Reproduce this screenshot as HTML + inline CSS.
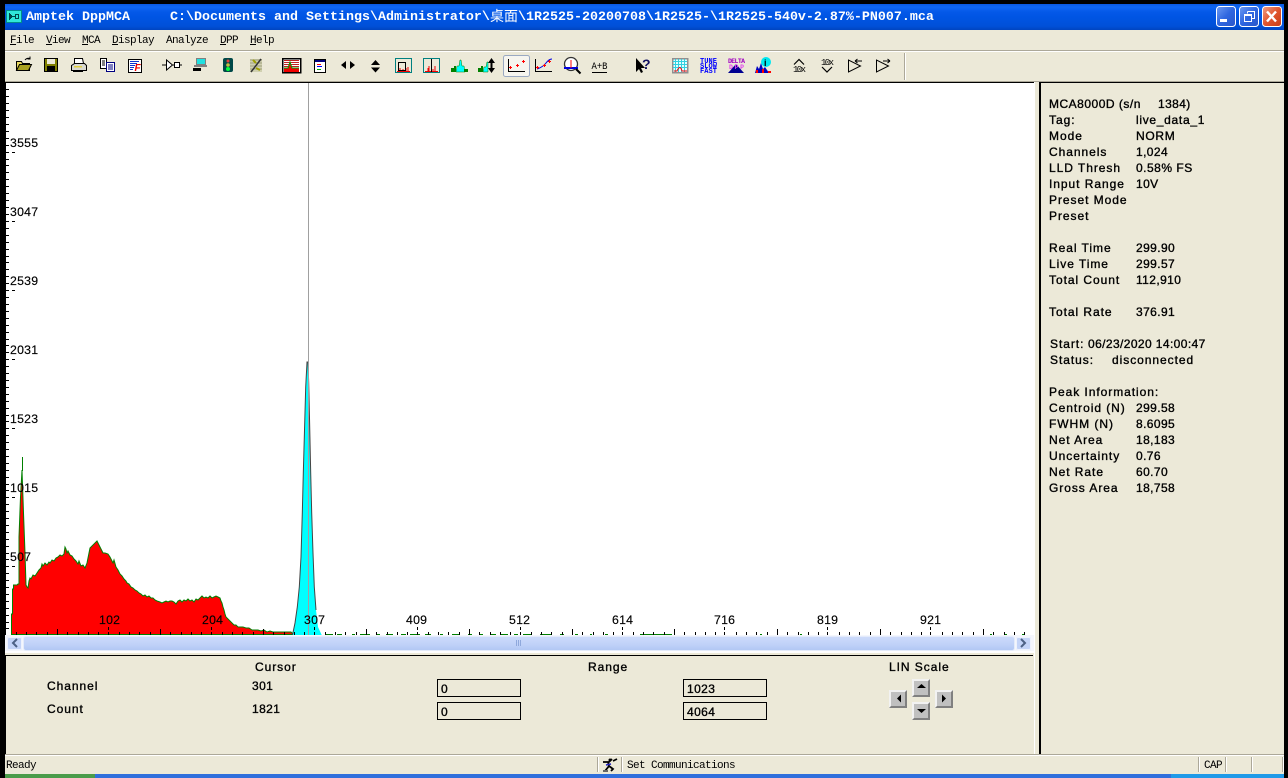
<!DOCTYPE html>
<html><head><meta charset="utf-8"><title>Amptek DppMCA</title>
<style>
html,body{margin:0;padding:0;background:#000;width:1288px;height:778px;overflow:hidden}
#a{position:absolute;left:0;top:0;width:1288px;height:778px;overflow:hidden;background:#000}
#a div,#a span.t{position:absolute}
.t{position:absolute;white-space:pre;line-height:14px;font-family:"Liberation Sans",sans-serif;font-size:12px;letter-spacing:.95px;color:#000;-webkit-text-stroke:.35px #000}
.v{letter-spacing:.4px}
.m{position:absolute;margin-top:1px;white-space:pre;line-height:14px;font-family:"Liberation Mono",monospace;font-size:11px;letter-spacing:-.6px;color:#000}
.m u{text-decoration:underline}
.l{position:absolute;white-space:pre;line-height:14px;font-family:"Liberation Sans",sans-serif;font-size:12.3px;letter-spacing:.25px;color:#000;-webkit-text-stroke:.15px #000}
.h{position:absolute;white-space:pre;line-height:20px;top:7px;margin-top:1px;font-family:"Liberation Mono",monospace;font-weight:bold;font-size:13.33px;color:#fff}
.box{border:1px solid #000;box-sizing:border-box;height:18px;width:84px}
.btn{width:18px;height:18px;box-sizing:border-box;background:#c0c0c0;border:2px solid;border-color:#f2f2f2 #808080 #808080 #f2f2f2}
.sep{width:1px;height:15px;top:757px;background:#aca899;box-shadow:1px 0 #fff}
</style></head><body><div id="a">
<!-- title bar -->
<div style="left:5px;top:4px;width:1279px;height:26px;background:linear-gradient(#0a58e0 0,#0f66f2 3px,#0458e8 8px,#0055e4 50%,#0050d8 85%,#0044c0 100%)"></div>
<svg style="position:absolute;left:6px;top:10px" width="16" height="13" shape-rendering="crispEdges"><rect x="0" y="0" width="16" height="13" fill="#008c8c"/><rect x="1" y="1" width="14" height="11" fill="#30e8d8"/><path d="M3 3v7h1V9h1V8h1V5H5V4H4V3z" fill="#004848"/><rect x="9" y="4" width="4" height="5" fill="#004848"/><rect x="10" y="5" width="2" height="3" fill="#30e8d8"/><rect x="6" y="6" width="3" height="1" fill="#004848"/></svg>
<span class="h" style="left:26px">Amptek DppMCA</span>
<span class="h" style="left:170px">C:\Documents and Settings\Administrator\</span>
<span class="h" style="left:490px;font-family:'Liberation Mono','WenQuanYi Zen Hei','Noto Sans CJK SC',monospace;font-size:14px;font-weight:normal">桌面</span>
<span class="h" style="left:518px">\1R2525-20200708\1R2525-\1R2525-540v-2.87%-PN007.mca</span>
<svg style="position:absolute;left:1215px;top:5px" width="68" height="24">
<defs><linearGradient id="bb" x1="0" y1="0" x2="1" y2="1"><stop offset="0" stop-color="#6f9cf2"/><stop offset=".5" stop-color="#2e66e0"/><stop offset="1" stop-color="#2a56c8"/></linearGradient>
<linearGradient id="rb" x1="0" y1="0" x2="1" y2="1"><stop offset="0" stop-color="#f0a088"/><stop offset=".5" stop-color="#e0552e"/><stop offset="1" stop-color="#c83c14"/></linearGradient></defs>
<rect x="1.500" y="1.500" width="19" height="20" rx="3" fill="url(#bb)" stroke="#fff"/>
<rect x="5" y="14" width="7" height="3" fill="#fff"/>
<rect x="24.500" y="1.500" width="19" height="20" rx="3" fill="url(#bb)" stroke="#fff"/>
<path d="M32.500 6.500h7v7h-3M32.500 6.500v2" fill="none" stroke="#fff"/><rect x="29.500" y="9.500" width="7" height="7" fill="none" stroke="#fff"/><rect x="29" y="9" width="8" height="2" fill="#fff"/>
<rect x="47.500" y="1.500" width="19" height="20" rx="3" fill="url(#rb)" stroke="#fff"/>
<path d="M52 6.500l9 10M61 6.500l-9 10" stroke="#fff" stroke-width="2.400"/>
</svg>
<!-- menu + toolbar area -->
<div style="left:5px;top:30px;width:1279px;height:52px;background:#ece9d8"></div>
<div style="left:5px;top:50px;width:1279px;height:1px;background:#aca899"></div>
<div style="left:5px;top:51px;width:1279px;height:1px;background:#fff"></div>
<div style="left:5px;top:81px;width:1279px;height:1px;background:#aca899"></div>
<div style="left:904px;top:53px;width:1px;height:27px;background:#aca899;box-shadow:1px 0 #fff"></div>
<span class="m" style="left:10px;top:33px"><u>F</u>ile</span>
<span class="m" style="left:46px;top:33px"><u>V</u>iew</span>
<span class="m" style="left:82px;top:33px"><u>M</u>CA</span>
<span class="m" style="left:112px;top:33px"><u>D</u>isplay</span>
<span class="m" style="left:166px;top:33px">Analyze</span>
<span class="m" style="left:220px;top:33px"><u>D</u>PP</span>
<span class="m" style="left:250px;top:33px"><u>H</u>elp</span>
<!-- toolbar icons -->
<svg style="position:absolute;left:0;top:52px" width="920" height="30" viewBox="0 52 920 30">
<!-- open -->
<path d="M16.500 61.500h5l1 2h7v7h-13z" fill="#e8d860" stroke="#000"/><path d="M16.500 70.500l3-6h12l-3 6z" fill="#a8a020" stroke="#000"/><path d="M25 60q2-2.500 5-1.500M30 56.500v2.500h-2.500" fill="none" stroke="#000"/>
<!-- save -->
<g shape-rendering="crispEdges"><rect x="44.500" y="58.500" width="13" height="13" fill="#808000" stroke="#000"/><rect x="47" y="59" width="8" height="5" fill="#ece9d8"/><rect x="47" y="66" width="8" height="5" fill="#000"/></g>
<!-- print -->
<path d="M74.500 58.500h8l1 5h-9z" fill="#fff" stroke="#000"/><path d="M71.500 65.500l3-2h10l2 2v5h-15z" fill="#d8d8d0" stroke="#000"/><rect x="74" y="66" width="8" height="1.500" fill="#e0d040"/><path d="M73 70.500h10v1.500H73z" fill="#000"/>
<!-- copy -->
<g shape-rendering="crispEdges"><path d="M100.500 58.500h6v10h-6z" fill="#fff" stroke="#000"/><path d="M102 61h3M102 63h3M102 65h3" stroke="#000"/><path d="M106.500 62.500h8v9h-8z" fill="#fff" stroke="#000080"/><path d="M108 65h5M108 67h5M108 69h5" stroke="#000080"/></g>
<!-- F doc -->
<g shape-rendering="crispEdges"><rect x="128.500" y="59.500" width="13" height="13" fill="#fff" stroke="#000"/><path d="M130 61.500h9M130 63.500h7M130 65.500h5M130 67.500h4M130 69.500h3" stroke="#1030d0"/></g>
<text x="134.500" y="71" font-family="Liberation Sans,sans-serif" font-size="10" font-weight="bold" font-style="italic" fill="#f00000">F</text>
<!-- diode -->
<g shape-rendering="crispEdges"><path d="M162 65h4M179 65h3M173 65h1" stroke="#000"/><rect x="174.500" y="62.500" width="5" height="5" fill="#fff" stroke="#000"/></g><path d="M166.500 60v10l6-5z" fill="#fff" stroke="#000"/>
<!-- computer -->
<g shape-rendering="crispEdges"><rect x="196.500" y="58.500" width="9" height="6" fill="#20e0e0" stroke="#808080"/><rect x="194" y="65" width="13" height="2" fill="#808080"/><rect x="193" y="68" width="8" height="3" fill="#000"/></g>
<!-- traffic -->
<rect x="223" y="58" width="10" height="14" rx="2" fill="#004848"/><circle cx="228" cy="61" r="1.500" fill="#e04040"/><circle cx="228" cy="65" r="1.800" fill="#c0c040"/><circle cx="228" cy="69" r="2" fill="#00ff40"/>
<!-- satellite -->
<g shape-rendering="crispEdges"><rect x="250" y="59" width="12" height="13" fill="#d0d0b0"/><path d="M250 60h12M250 63h12M250 66h12M250 69h12" stroke="#a0a080"/></g><path d="M251 72l10-13" stroke="#333" stroke-width="1.500"/><path d="M253 60l3 3M256 68l4 2" stroke="#a0a000" stroke-width="2"/>
<!-- red chart -->
<g shape-rendering="crispEdges"><rect x="282.500" y="58.500" width="18" height="14" fill="#fff" stroke="#000" stroke-width="1.500"/><path d="M284 60.500h15M284 62.500h15M284 64.500h15M284 66.500h15" stroke="#c02020"/><rect x="284" y="68" width="15" height="4" fill="#f00000"/></g><path d="M284 68h4l2-6 2 6h7" fill="#f00000" stroke="#00a000"/>
<!-- list -->
<g shape-rendering="crispEdges"><rect x="314.500" y="59.500" width="11" height="13" fill="#fff" stroke="#000"/><rect x="315" y="60" width="10" height="2" fill="#000080"/><path d="M317 64.500h4" stroke="#f00"/><path d="M317 66.500h5" stroke="#00f"/><path d="M317 69.500h4" stroke="#0a0"/></g>
<!-- arrows -->
<path d="M346 61v8l-5-4zM350 61v8l5-4z" fill="#000"/>
<path d="M375.500 60l-4.500 5h9zM375.500 72.500l-4.500-5h9z" fill="#000"/>
<!-- zoom boxes -->
<g shape-rendering="crispEdges"><rect x="395.500" y="58.500" width="16" height="14" fill="#ece9d8" stroke="#008080"/><path d="M397 71.500h13M400 71v-3M406 71v-3M403 71v-2M408 71v-4" stroke="#f00000"/><rect x="398.500" y="62.500" width="7" height="8" fill="none" stroke="#000"/>
<rect x="423.500" y="58.500" width="16" height="14" fill="#ece9d8" stroke="#008080"/><path d="M425 71.500h13M428 71v-3M435 71v-5M433 71v-2M429 71v-5" stroke="#f00000"/><path d="M431.500 59v13" stroke="#000"/></g>
<!-- peaks -->
<path d="M451 72v-4h3v-2h2v6z" fill="#008000"/><path d="M456 72l1-6h2l1-6h1l1 6h2l1 6z" fill="#00ffff" stroke="#008000" stroke-width=".5"/><path d="M464 72v-3h4v3z" fill="#008000"/>
<path d="M478 72v-4h3v-2h2v6z" fill="#008000"/><path d="M483 72l1-5h2l1-5h1v10z" fill="#00ffff" stroke="#008000" stroke-width=".5"/><path d="M491.500 62v8" stroke="#000" stroke-width="2"/><path d="M491.500 58l-3.500 5h7zM491.500 73l-3.500-5h7z" fill="#000"/>
<!-- selected -->
<rect x="503.500" y="55.500" width="26" height="21" rx="2" fill="#f6f5ef" stroke="#9aa9c2"/>
<g shape-rendering="crispEdges"><path d="M508.500 59v12.500H525" fill="none" stroke="#000"/><path d="M509 67.500h3M510.500 66v3M516 65.500h3M517.500 64v3M522 61.500h3M523.500 60v3" stroke="#f00"/>
<path d="M535.500 59v12.500H552" fill="none" stroke="#000"/></g>
<path d="M537 69q6-2 9-6t6-4" fill="none" stroke="#0000e0"/><path d="M536 67.500h3M537.500 66v3M543 65.500h3M544.500 64v3M548 61.500h3M549.500 60v3" stroke="#f00" shape-rendering="crispEdges"/>
<!-- magnifier -->
<circle cx="571" cy="64" r="6.500" fill="#fff" stroke="#333" stroke-width="1.300"/><path d="M564 68h14" stroke="#0000e0" stroke-width="2"/><path d="M571 60v8" stroke="#f00"/><path d="M576 69l4.500 4.500" stroke="#000" stroke-width="2"/>
<!-- A+B -->
<text x="591.500" y="69" font-family="Liberation Mono,monospace" font-size="10" fill="#000" textLength="16" lengthAdjust="spacingAndGlyphs">A+B</text><path d="M592 72.500h15" stroke="#000"/>
<!-- help arrow -->
<path d="M636 58v14l3-3 2 4 2-1-2-4h4z" fill="#000"/><text x="642" y="69" font-family="Liberation Sans,sans-serif" font-size="14" font-weight="bold" fill="#101060">?</text>
<!-- grid -->
<g shape-rendering="crispEdges"><rect x="672.500" y="58.500" width="15" height="14" fill="#e0ffff" stroke="#909090" stroke-width="1.500"/><path d="M675.500 59v13M678.500 59v13M681.500 59v13M684.500 59v13M673 61.500h14M673 64.500h14M673 67.500h14" stroke="#30d0e0"/></g><path d="M674 71h3q3-7 5 0h5" fill="none" stroke="#f00"/>
<!-- tune -->
<g font-family="Liberation Mono,monospace" font-size="7" font-weight="bold" fill="#0000ff"><text x="700" y="63" textLength="17">TUNE</text><text x="700" y="68" textLength="17">SLOW</text><text x="700" y="73" textLength="17">FAST</text></g>
<!-- delta -->
<path d="M728 73l8-9 8 9z" fill="#000090"/><text x="728" y="63" font-family="Liberation Mono,monospace" font-size="6.500" font-weight="bold" fill="#a000c0" textLength="17">DELTA</text><text x="729" y="69" font-family="Liberation Mono,monospace" font-size="6.500" font-weight="bold" fill="#e040f0" textLength="15">DPP</text>
<!-- info -->
<path d="M755 73l2-7 2 3 2-6 2 6 2-2 2 3 2 3z" fill="#0000c0"/><path d="M756 73v-3h2v3zM762 73v-4h2v4zM768 73v-2h3v2z" fill="#f00"/><circle cx="766" cy="62" r="5" fill="#00e8f0"/><text x="764" y="66" font-family="Liberation Sans,sans-serif" font-size="9" font-weight="bold" fill="#000">i</text>
<!-- 10x -->
<path d="M794 64.500l5-5 5 5" fill="none" stroke="#000" stroke-width="1.200"/><text x="793" y="72" font-family="Liberation Mono,monospace" font-size="9" fill="#000" textLength="13">10x</text>
<text x="821" y="65" font-family="Liberation Mono,monospace" font-size="9" fill="#000" textLength="13">10x</text><path d="M822 67l5 5 5-5" fill="none" stroke="#000" stroke-width="1.200"/>
<!-- triangles -->
<path d="M848.500 60v12l12-6z" fill="none" stroke="#000"/><path d="M855 61h7M855 61l2.500-2M855 61l2.500 2" stroke="#000" fill="none"/>
<path d="M876.500 60v12l12-6z" fill="none" stroke="#000"/><path d="M883 61h7M890 61l-2.500-2M890 61l-2.500 2" stroke="#000" fill="none"/>
</svg>
<!-- main bg -->
<div style="left:5px;top:82px;width:1279px;height:692px;background:#ece9d8"></div>
<!-- chart -->
<div style="left:5px;top:82px;width:1029px;height:571px;background:#fff"></div>
<div style="left:5px;top:82px;width:1029px;height:1px;background:#000"></div>
<div style="left:5px;top:82px;width:1px;height:553px;background:#000"></div>
<svg style="position:absolute;left:0;top:0" width="1040" height="640">
<!-- y minor ticks -->
<path shape-rendering="crispEdges" stroke="#000" d="M6 89.500h3M6 96.500h3M6 103.500h3M6 110.500h3M6 117.500h3M6 124.500h3M6 131.500h3M6 138.500h3M6 145.500h3M6 152.500h3M6 159.500h3M6 165.500h3M6 172.500h3M6 179.500h3M6 186.500h3M6 193.500h3M6 200.500h3M6 207.500h3M6 214.500h3M6 221.500h3M6 228.500h3M6 235.500h3M6 242.500h3M6 249.500h3M6 256.500h3M6 262.500h3M6 269.500h3M6 276.500h3M6 283.500h3M6 290.500h3M6 297.500h3M6 304.500h3M6 311.500h3M6 318.500h3M6 325.500h3M6 332.500h3M6 339.500h3M6 345.500h3M6 352.500h3M6 359.500h3M6 366.500h3M6 373.500h3M6 380.500h3M6 387.500h3M6 394.500h3M6 401.500h3M6 408.500h3M6 415.500h3M6 421.500h3M6 428.500h3M6 435.500h3M6 442.500h3M6 449.500h3M6 456.500h3M6 463.500h3M6 470.500h3M6 477.500h3M6 484.500h3M6 490.500h3M6 497.500h3M6 504.500h3M6 511.500h3M6 518.500h3M6 525.500h3M6 532.500h3M6 539.500h3M6 546.500h3M6 553.500h3M6 559.500h3M6 566.500h3M6 573.500h3M6 580.500h3M6 587.500h3M6 594.500h3M6 601.500h3M6 608.500h3M6 615.500h3M6 622.500h3M6 628.500h3M12 152.500h3M12 221.500h3M12 290.500h3M12 359.500h3M12 428.500h3M12 497.500h3M12 566.500h3"/>
<!-- spectrum red -->
<path fill="#ff0000" stroke="#008000" stroke-width="1" d="M11.500 634.500L11.500 614 12.500 614 12.500 589 13.500 589 13.500 585 17 585 18 584 19 584 19 537 20.500 497 22 470 23.500 513 25 553 26 585 27 587 28 588 29 581 30 578 31 579 33 575 35 576 37 573 39 570 41 568 42 564 43 566 45 563 47 565 49 562 50 563 52 560 54 561 56 558 58 557 60 555 62 556 64 554 65 547 66 549 67 553 68 551 70 555 72 556 74 559 76 561 78 564 79 561 81 566 83 565 85 568 87 563 89 553 90 548 92 546 94 544 96 542 97 541 99 545 101 549 103 553 105 553 108 554 110 557 112 561 113 563 114 560 116 567 118 570 120 574 122 576 124 579 126 581 127 583 129 584 131 587 133 588 135 590 137 591 139 593 141 594 143 596 145 595 147 597 149 596 151 598 153 598 155 600 157 601 160 602 162 603 164 602 166 601 168 602 170 601 172 601 174 602 176 604 178 601 180 600 182 602 184 600 186 601 188 599 190 601 192 600 194 602 196 599 198 600 200 598 202 596 204 598 206 597 208 598 210 596 212 598 214 597 216 596 218 597 220 598 221 601 222 603 223 607 224 610 225 614 226 617 228 619 230 621 232 623 234 625 236 625 238 627 240 627 243 627 246 628 249 628 252 630 255 630 258 630 261 631 264 630 267 632 270 631 273 632 276 632 279 632 282 632 285 632 288 632 291 632 293 634 293 634.500Z"/>
<path d="M22.500 457v14" stroke="#008000" stroke-width="1"/>
<!-- baseline green bits -->
<path shape-rendering="crispEdges" stroke="#008000" d="M325 634.500h8M337 634.500h5M352 634.500h3M360 634.500h10M376 634.500h4M386 634.500h7M401 634.500h5M410 634.500h10M425 634.500h6M440 634.500h3M452 634.500h8M468 634.500h4M480 634.500h3M490 634.500h6M500 634.500h8M514 634.500h4M523 634.500h8M540 634.500h6M546 634.500h6M560 634.500h4M575 634.500h3M590 634.500h2M605 634.500h3M640 634.500h32M760 634.500h2M800 634.500h2M990 634.500h2M1005 634.500h2M1022 634.500h2"/>
<!-- cyan peak -->
<path fill="#00ffff" stroke="none" d="M292.500 635l2.500-12 2.300-16 2-20 1.700-30 1.300-44 1-40 1.400-50 1-36 1.300-25h1l.7 21 1 44 1 46 1 40 1.300 40 1.300 34 1.700 23 2 17 3.700 8z"/>
<path fill="none" stroke="#444" stroke-width="1" d="M292.500 635l2.500-12 2.300-16 2-20 1.700-30 1.300-44 1-40 1.400-50 1-36 1.300-25h1l.7 21 1 44 1 46 1 40 1.300 40 1.300 34 1.700 23"/>
<!-- cursor -->
<path shape-rendering="crispEdges" stroke="#a0a0a0" d="M308.500 83v552"/>
<!-- x ticks -->
<path shape-rendering="crispEdges" stroke="#000" d="M16.500 632v3M26.500 632v3M36.500 632v3M47.500 632v3M67.500 632v3M78.500 632v3M88.500 632v3M98.500 632v3M119.500 632v3M129.500 632v3M139.500 632v3M150.500 632v3M170.500 632v3M181.500 632v3M191.500 632v3M201.500 632v3M222.500 632v3M232.500 632v3M242.500 632v3M253.500 632v3M273.500 632v3M284.500 632v3M294.500 632v3M304.500 632v3M325.500 632v3M335.500 632v3M345.500 632v3M356.500 632v3M376.500 632v3M387.500 632v3M397.500 632v3M407.500 632v3M428.500 632v3M438.500 632v3M448.500 632v3M459.500 632v3M479.500 632v3M490.500 632v3M500.500 632v3M510.500 632v3M531.500 632v3M541.500 632v3M551.500 632v3M562.500 632v3M582.500 632v3M593.500 632v3M603.500 632v3M613.500 632v3M633.500 632v3M643.500 632v3M653.500 632v3M664.500 632v3M684.500 632v3M695.500 632v3M705.500 632v3M715.500 632v3M736.500 632v3M746.500 632v3M756.500 632v3M767.500 632v3M787.500 632v3M798.500 632v3M808.500 632v3M818.500 632v3M839.500 632v3M849.500 632v3M859.500 632v3M870.500 632v3M890.500 632v3M901.500 632v3M911.500 632v3M921.500 632v3M942.500 632v3M952.500 632v3M962.500 632v3M973.500 632v3M993.500 632v3M1004.500 632v3M1014.500 632v3M1024.500 632v3M57.500 629v6M160.500 629v6M263.500 629v6M366.500 629v6M469.500 629v6M572.500 629v6M674.500 629v6M777.500 629v6M880.500 629v6M983.500 629v6M108.500 627v3M108.500 632v3M211.500 627v3M211.500 632v3M314.500 627v3M314.500 632v3M417.500 627v3M417.500 632v3M520.500 627v3M520.500 632v3M622.500 627v3M622.500 632v3M724.500 627v3M724.500 632v3M827.500 627v3M827.500 632v3M930.500 627v3M930.500 632v3"/>
</svg>
<span class="l" style="left:10px;top:136px">3555</span>
<span class="l" style="left:10px;top:205px">3047</span>
<span class="l" style="left:10px;top:274px">2539</span>
<span class="l" style="left:10px;top:343px">2031</span>
<span class="l" style="left:10px;top:412px">1523</span>
<span class="l" style="left:10px;top:481px">1015</span>
<span class="l" style="left:10px;top:550px">507</span>
<span class="l" style="left:99px;top:613px">102</span>
<span class="l" style="left:202px;top:613px">204</span>
<span class="l" style="left:304px;top:613px">307</span>
<span class="l" style="left:406px;top:613px">409</span>
<span class="l" style="left:509px;top:613px">512</span>
<span class="l" style="left:612px;top:613px">614</span>
<span class="l" style="left:714px;top:613px">716</span>
<span class="l" style="left:817px;top:613px">819</span>
<span class="l" style="left:920px;top:613px">921</span>
<!-- scrollbar -->
<div style="left:5px;top:635px;width:1029px;height:16px;background:#f4f6fc"></div>
<div style="left:7px;top:637px;width:15px;height:13px;background:#c4d4f8;border-radius:2px;box-shadow:inset 0 0 0 1px #eef2fd"></div>
<div style="left:24px;top:637px;width:990px;height:13px;background:linear-gradient(#cddbfb,#bfd1f8 60%,#b2c8f4);border-radius:2px;box-shadow:0 0 0 1px #e4ebfb"></div>
<div style="left:1016px;top:637px;width:15px;height:13px;background:#c4d4f8;border-radius:2px;box-shadow:inset 0 0 0 1px #eef2fd"></div>
<svg style="position:absolute;left:0;top:635px" width="1040" height="16"><path d="M17 4l-4 4 4 4" fill="none" stroke="#4d6185" stroke-width="2"/><path d="M1021 4l4 4-4 4" fill="none" stroke="#4d6185" stroke-width="2"/><path d="M516.500 5v6M518.500 5v6M520.500 5v6" stroke="#8fa8dc"/></svg>
<!-- bottom panel -->
<div style="left:5px;top:653px;width:1029px;height:101px;background:#ece9d8"></div>
<div style="left:5px;top:655px;width:1028px;height:1px;background:#000"></div>
<div style="left:5px;top:655px;width:1px;height:99px;background:#000"></div>
<div style="left:1034px;top:82px;width:1px;height:672px;background:#fff"></div>
<span class="t" style="left:255px;top:660px">Cursor</span>
<span class="t" style="left:588px;top:660px">Range</span>
<span class="t" style="left:889px;top:660px">LIN Scale</span>
<span class="t" style="left:47px;top:679px">Channel</span>
<span class="t" style="left:47px;top:702px">Count</span>
<span class="t v" style="left:252px;top:679px">301</span>
<span class="t v" style="left:252px;top:702px">1821</span>
<div class="box" style="left:437px;top:679px"></div>
<div class="box" style="left:437px;top:702px"></div>
<div class="box" style="left:683px;top:679px"></div>
<div class="box" style="left:683px;top:702px"></div>
<span class="t v" style="left:441px;top:682px">0</span>
<span class="t v" style="left:441px;top:705px">0</span>
<span class="t v" style="left:687px;top:682px">1023</span>
<span class="t v" style="left:687px;top:705px">4064</span>
<div class="btn" style="left:912px;top:679px"></div>
<div class="btn" style="left:912px;top:702px"></div>
<div class="btn" style="left:889px;top:690px"></div>
<div class="btn" style="left:935px;top:690px"></div>
<svg style="position:absolute;left:885px;top:675px" width="72" height="50"><path d="M36.500 9l-4.500 4h9zM36.500 38l-4.500-4h9zM16 19.500v8l-4-4zM57 19.500v8l4-4z" fill="#000"/></svg>
<!-- right panel -->
<div style="left:1039px;top:82px;width:245px;height:1px;background:#000"></div>
<div style="left:1039px;top:82px;width:2px;height:672px;background:#000"></div>
<span class="t" style="left:1049px;top:97px;letter-spacing:.5px">MCA8000D (s/n</span><span class="t v" style="left:1158px;top:97px">1384)</span>
<span class="t" style="left:1049px;top:113px">Tag:</span><span class="t" style="left:1136px;top:113px;letter-spacing:.7px">live_data_1</span>
<span class="t" style="left:1049px;top:129px">Mode</span><span class="t" style="left:1136px;top:129px;letter-spacing:.7px">NORM</span>
<span class="t" style="left:1049px;top:145px">Channels</span><span class="t v" style="left:1136px;top:145px">1,024</span>
<span class="t" style="left:1049px;top:161px">LLD Thresh</span><span class="t" style="left:1136px;top:161px;letter-spacing:.5px">0.58% FS</span>
<span class="t" style="left:1049px;top:177px">Input Range</span><span class="t v" style="left:1136px;top:177px">10V</span>
<span class="t" style="left:1049px;top:193px">Preset Mode</span>
<span class="t" style="left:1049px;top:209px">Preset</span>
<span class="t" style="left:1049px;top:241px">Real Time</span><span class="t v" style="left:1136px;top:241px">299.90</span>
<span class="t" style="left:1049px;top:257px">Live Time</span><span class="t v" style="left:1136px;top:257px">299.57</span>
<span class="t" style="left:1049px;top:273px">Total Count</span><span class="t v" style="left:1136px;top:273px">112,910</span>
<span class="t" style="left:1049px;top:305px">Total Rate</span><span class="t v" style="left:1136px;top:305px">376.91</span>
<span class="t" style="left:1050px;top:337px">Start:</span><span class="t v" style="left:1088px;top:337px">06/23/2020 14:00:47</span>
<span class="t" style="left:1050px;top:353px">Status:</span><span class="t" style="left:1112px;top:353px">disconnected</span>
<span class="t" style="left:1049px;top:385px">Peak Information:</span>
<span class="t" style="left:1049px;top:401px">Centroid (N)</span><span class="t v" style="left:1136px;top:401px">299.58</span>
<span class="t" style="left:1049px;top:417px">FWHM (N)</span><span class="t v" style="left:1136px;top:417px">8.6095</span>
<span class="t" style="left:1049px;top:433px">Net Area</span><span class="t v" style="left:1136px;top:433px">18,183</span>
<span class="t" style="left:1049px;top:449px">Uncertainty</span><span class="t v" style="left:1136px;top:449px">0.76</span>
<span class="t" style="left:1049px;top:465px">Net Rate</span><span class="t v" style="left:1136px;top:465px">60.70</span>
<span class="t" style="left:1049px;top:481px">Gross Area</span><span class="t v" style="left:1136px;top:481px">18,758</span>
<!-- status bar -->
<div style="left:5px;top:754px;width:1279px;height:1px;background:#aca899"></div>
<div style="left:5px;top:755px;width:1279px;height:1px;background:#fff"></div>
<span class="m" style="left:6px;top:758px">Ready</span>
<div class="sep" style="left:597px"></div>
<div class="sep" style="left:621px"></div>
<div class="sep" style="left:1198px"></div>
<div class="sep" style="left:1225px"></div>
<div class="sep" style="left:1251px"></div>
<div class="sep" style="left:1282px"></div>
<svg style="position:absolute;left:601px;top:757px" width="18" height="16"><path d="M2 5h6l3-3M7 5l1 4-4 5M8 9l4 3-2 2M12 4l4-2" fill="none" stroke="#000" stroke-width="1.800"/><circle cx="9" cy="3" r="1.500" fill="#000"/><path d="M5 8l5-1" stroke="#2020c0" stroke-width="1.500"/><path d="M2 14h5" stroke="#666" stroke-width="2"/></svg>
<span class="m" style="left:627px;top:758px">Set Communications</span>
<span class="m" style="left:1204px;top:758px">CAP</span>
<!-- taskbar -->
<div style="left:5px;top:774px;width:90px;height:4px;background:#4a9c4a"></div>
<div style="left:95px;top:774px;width:1076px;height:4px;background:#2f6fdc"></div>
<div style="left:1171px;top:774px;width:113px;height:4px;background:#1f9ae8"></div>
</div></body></html>
